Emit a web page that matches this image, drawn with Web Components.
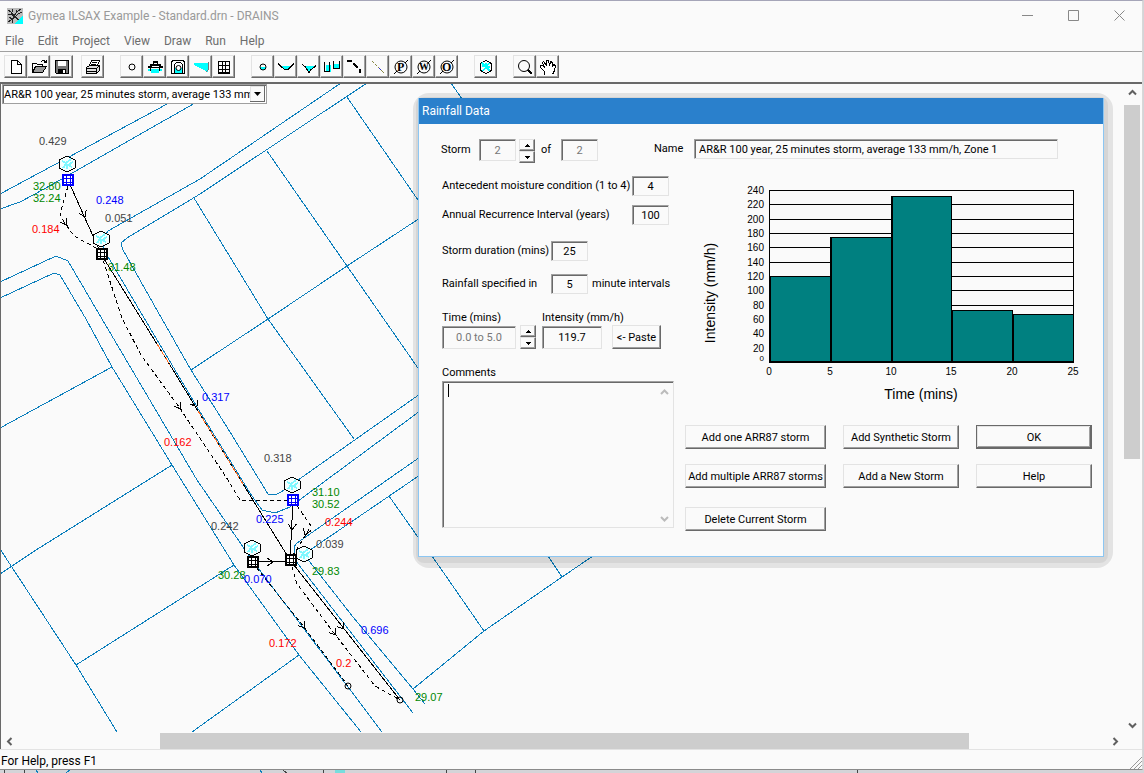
<!DOCTYPE html>
<html lang="en">
<head>
<meta charset="utf-8">
<title>Gymea ILSAX Example - Standard.drn - DRAINS</title>
<style>
  html, body {
    margin: 0;
    height: 100%;
    overflow: hidden;
    background: #d4d4d8;
  }
</style>
</head>
<body>
<drains-window></drains-window>

<script>
const attach = (element, html) => {
  const root = element.attachShadow({ mode: 'open' });
  root.innerHTML = html;
  return root;
};

// toolbar glyphs, 16x16
const ICONS = {
  new: '<path d="M3.5 1.5h6l4 4v9h-10zM9.5 1.5v4h4" fill="#fff" stroke="#000"/>',
  open: '<path d="M1.5 13.5v-9h4l1 1h5v2" fill="none" stroke="#000"/><path d="M1.5 13.5l3-6h11l-4 6z" fill="#999" stroke="#000"/><path d="M9.5 3.5l2-2h2l1 2M12.5 3.5h3v-3" fill="none" stroke="#000"/>',
  save: '<path d="M1.5 1.5h13v13h-12l-1-1z" fill="#777" stroke="#000"/><path d="M4 2h8v5H4z" fill="#fff"/><path d="M4 10h8v4H4z" fill="#000"/><path d="M9 11h2v3H9z" fill="#fff"/>',
  print: '<path d="M4.5 6.5l2-5h8l-2 5" fill="#fff" stroke="#000"/><path d="M7 3.5h5M6 5.5h5" stroke="#000"/><path d="M1.5 8.5l3-2h10v5l-3 3h-10z" fill="#ddd" stroke="#000"/><path d="M1.5 9.5h10l3-3M11.5 9.5v5M2 12.5h9" fill="none" stroke="#000"/>',
  node: '<circle cx="8" cy="8" r="3" fill="none" stroke="#000"/>',
  pit: '<path d="M1 10h14v2H1zM4 12h8v2H4z" fill="#0ff"/><path d="M6 2h5v3h3v2h2v2H1V7h2V5h3z"/><path d="M3.5 9v3M12.5 9v3" stroke="#000"/><path d="M7 4h3v1H7zM5 7h7v1H5z" fill="#fff"/>',
  basin: '<path d="M1.5 14.5v-12h1v-1h11v1h1v12z" fill="none" stroke="#000"/><path d="M4.5 13V5.5l2-2h4l2 2V13z" fill="#fff" stroke="#000"/><path d="M5 9h7v5H5z" fill="#0ff"/><circle cx="8.5" cy="9" r="2.5" fill="#fff" stroke="#000"/>',
  channel: '<path d="M1 4h14v9L1 6z" fill="#0ff"/><path d="M15.5 3v7l-2 3" stroke="#777" fill="none"/>',
  culvert: '<path d="M2.5 2.5h11v11h-11zM2 6.5h11M2 10.5h11M6.5 2v12M9.5 2v12" fill="none" stroke="#000"/><path d="M2 14.5h12" stroke="#000"/>',
  sub: '<path d="M5 8h6v1l-2 2H7l-2-2z" fill="#0ff"/><circle cx="8" cy="8" r="3" fill="none" stroke="#000"/>',
  swale: '<path d="M3 7h10l-4 4H7z" fill="#0ff"/><path d="M0 4.5l3 3 4 3h3l3-3 3-3" fill="none" stroke="#000"/>',
  river: '<path d="M3 7h11l-4 3-2 4-2-4z" fill="#0ff"/><path d="M1 5.5l3 2 2 3 2 3 2-3 3-2 2-2" fill="none" stroke="#000"/>',
  tanks: '<path d="M1.5 5.5h5v7h-5zM9.5 4.5h5v5h-5z" fill="#0ff"/><path d="M.5 3v9h5V3M9.5 2v7h6V2" fill="none" stroke="#000"/>',
  overflow: '<path d="M0 1h5v2H0z"/><path d="M6 4.5l5 4" stroke="#000" stroke-width="2"/><path d="M12 10h2v4h-2z"/>',
  line: '<path d="M2 2l12 12" stroke="#884" stroke-dasharray="3 1"/><path d="M9 9l2 2" stroke="#33c"/>',
  pipe: '<circle cx="8" cy="8" r="6" fill="none" stroke="#000"/><path d="M1 15l3-3M12 4l3-3" stroke="#000"/><text x="4" y="12">P</text>',
  weir: '<circle cx="8" cy="8" r="6" fill="none" stroke="#000"/><path d="M1 15l3-3M12 4l3-3" stroke="#000"/><text class="small" x="3" y="11">W</text>',
  outlet: '<circle cx="8" cy="8" r="6" fill="none" stroke="#000"/><path d="M1 15l3-3M12 4l3-3" stroke="#000"/><text x="3" y="12">O</text>',
  catchment: '<path d="M8 1.5l5.5 3v7l-5.5 3-5.5-3v-7z" fill="none" stroke="#000"/><path d="M4 4l8 8M11 4l-6 8M4 7l8 1M8 4v4" stroke="#0ff" stroke-width="1.5"/>',
  zoom: '<circle cx="7" cy="7" r="5.5" fill="none" stroke="#000"/><path d="M11 11l4 4" stroke="#000" stroke-width="2"/>',
  pan: '<path d="M4.5 15.5v-3l-4-4v-2h2l2 2-2-5 1-1 3 4v-5h2l1 5 1-4 2 1v4l1-2 2 1-1 5-2 4" fill="#fff" stroke="#000"/>',
};

class ToolButton extends HTMLElement {
  constructor() {
    super();
    this.root = attach(this, `
      <style>
        :host { display: block; }
        button {
          display: grid;
          place-items: center;
          width: 23px;
          height: 23px;
          padding: 0;
          background: #fafafa;
          border: 1px solid #e3e3e3;
          border-right-color: #696969;
          border-bottom-color: #696969;
          box-shadow: inset -1px -1px #a0a0a0;
        }
        svg {
          width: 16px;
          height: 16px;
          shape-rendering: crispEdges;
          font: bold 12px "Liberation Serif", serif;
        }
        circle { shape-rendering: geometricPrecision; }
        .small { font-size: 10px; }
      </style>
      <button type="button"><svg viewBox="0 0 16 16"></svg></button>
    `);
  }

  connectedCallback() {
    const name = this.getAttribute('icon');
    this.root.querySelector('button').setAttribute('aria-label', name);
    this.root.querySelector('svg').innerHTML = ICONS[name];
  }
}
customElements.define('tool-button', ToolButton);

class ToolBar extends HTMLElement {
  constructor() {
    super();
    const groups = [
      ['new', 'open', 'save'],
      ['print'],
      ['node', 'pit', 'basin', 'channel', 'culvert'],
      ['sub', 'swale', 'river', 'tanks', 'overflow', 'line', 'pipe', 'weir', 'outlet'],
      ['catchment'],
      ['zoom', 'pan'],
    ];
    attach(this, `
      <style>
        :host {
          display: flex;
          gap: 16px;
          padding: 3px 4px 4px;
          border-top: 1px solid #a0a0a0;
        }
        div { display: flex; }
        div:nth-of-type(2) { margin-left: -8px; }
      </style>
      ${groups.map((group) => `<div>${group.map((name) => `<tool-button icon="${name}"></tool-button>`).join('')}</div>`).join('')}
    `);
  }
}
customElements.define('tool-bar', ToolBar);

class TitleBar extends HTMLElement {
  constructor() {
    super();
    attach(this, `
      <style>
        :host {
          display: flex;
          align-items: center;
          height: 29px;
          padding-left: 7px;
          color: #999;
        }
        h1 {
          flex: 1;
          margin: 0 0 0 5px;
          font-size: 12px;
          font-weight: normal;
        }
        .logo { width: 16px; height: 16px; shape-rendering: crispEdges; }
        button {
          width: 46px;
          height: 29px;
          padding: 0;
          border: none;
          background: none;
          display: grid;
          place-items: center;
        }
        button svg { width: 11px; height: 11px; fill: none; stroke: #888; }
      </style>
      <svg class="logo" viewBox="0 0 16 16">
        <path d="M0 0h16v16H0z" fill="#bbb"/>
        <path d="M16 7v9H8z" fill="#0ff"/>
        <path d="M1 2l3 2 3 4M5 1l1 3M1 6l4 1 3 2M7 8l3-4 4-3M9 2l1 3M15 4l-4 2-3 3-4 3-3 2M5 11v4M2 9l3 2M8 9l4 3" fill="none" stroke="#222"/>
      </svg>
      <h1><slot></slot></h1>
      <button type="button" aria-label="Minimize"><svg viewBox="0 0 11 11"><path d="M0 5.5h11"/></svg></button>
      <button type="button" aria-label="Maximize"><svg viewBox="0 0 11 11"><path d="M.5 .5h10v10h-10z"/></svg></button>
      <button type="button" aria-label="Close"><svg viewBox="0 0 11 11"><path d="M.5 .5l10 10M10.5 .5l-10 10"/></svg></button>
    `);
  }
}
customElements.define('title-bar', TitleBar);

class MenuBar extends HTMLElement {
  constructor() {
    super();
    const items = ['File', 'Edit', 'Project', 'View', 'Draw', 'Run', 'Help'];
    attach(this, `
      <style>
        :host {
          display: flex;
          align-items: center;
          gap: 14px;
          height: 21px;
          padding-left: 5px;
        }
        button {
          padding: 0;
          border: none;
          background: none;
          font: inherit;
          color: #6d6d6d;
        }
      </style>
      ${items.map((item) => `<button type="button">${item}</button>`).join('')}
    `);
  }
}
customElements.define('menu-bar', MenuBar);

class StormPicker extends HTMLElement {
  constructor() {
    super();
    attach(this, `
      <style>
        :host { display: block; width: 265px; }
        div {
          display: grid;
          grid-template-columns: 1fr 16px;
          height: 20px;
          box-sizing: border-box;
          background: #fff;
          border: 1px solid #a0a0a0;
          box-shadow: inset 1px 1px #696969;
        }
        select {
          appearance: none;
          grid-area: 1 / 1 / 2 / 3;
          min-width: 0;
          padding: 0 0 0 1px;
          border: none;
          background: none;
          color: #000;
          font: 11px Roboto, sans-serif;
        }
        svg {
          grid-area: 1 / 2;
          margin: 1px 0;
          width: 15px;
          height: 16px;
          background: #fafafa;
          box-shadow: inset -1px -1px #696969, inset 1px 1px #e3e3e3;
          pointer-events: none;
        }
      </style>
      <div>
        <select aria-label="Storm">
          <option>AR&amp;R 100 year, 25 minutes storm, average 133 mm</option>
        </select>
        <svg viewBox="0 0 15 16"><path d="M4 6h7l-3.5 4z"/></svg>
      </div>
    `);
  }
}
customElements.define('storm-picker', StormPicker);

// thumb="before size after", as shares of the track
class ScrollBar extends HTMLElement {
  constructor() {
    super();
    this.root = attach(this, `
      <style>
        :host { display: flex; background: #fafafa; }
        :host([vertical]) { flex-direction: column; }
        button {
          flex: none;
          display: grid;
          place-items: center;
          width: 16px;
          height: 16px;
          padding: 0;
          border: none;
          background: none;
        }
        svg { width: 9px; height: 9px; fill: none; stroke: #606060; stroke-width: 2; }
        :host([vertical]) svg { transform: rotate(90deg); }
        #thumb { background: #cdcdcd; }
      </style>
      <button type="button" aria-label="Back"><svg viewBox="0 0 9 9"><path d="M6.5 1L3 4.5 6.5 8"/></svg></button>
      <span></span><span id="thumb"></span><span></span>
      <button type="button" aria-label="Forward"><svg viewBox="0 0 9 9"><path d="M2.5 1L6 4.5 2.5 8"/></svg></button>
    `);
  }

  connectedCallback() {
    const shares = this.getAttribute('thumb').split(' ');
    this.root.querySelectorAll('span').forEach((span, i) => {
      span.style.flex = `${shares[i]} 1 0`;
    });
  }
}
customElements.define('scroll-bar', ScrollBar);

// Drainage network: parcel lines, pipes, overflow routes, nodes and results.
// Coordinates are window pixels, the group shifts them to the view's origin.
class DrainMap extends HTMLElement {
  constructor() {
    super();
    const parcels = [
      '0,194 67,158 206,83',
      '0,209 20,202 35,194 67,176 230,83',
      '341,83 200,179 108,231 103,238 104,250 150,328 200,412 250,493 262,510 275,513 290,507 420,411',
      '367,83 200,194 127,238 121,243 123,250 162,319 191,370 230,432 268,494 275,495 281,492 420,394',
      '347,97 420,203', '451,83 462,99',
      '267,151 347,266 420,371',
      '194,198 268,319 354,439',
      '420,218 347,266 268,319 191,370',
      '0,282 56,256 68,261 102,319 197,480 252,560 382,732',
      '0,298 54,273 60,275 86,319 112,367 172,465 234,565 299,655 361,732',
      '0,428 112,367', '0,574 36,550 172,465', '76,665 234,565', '192,732 299,655',
      '0,549 76,665 117,732',
      '420,457 297,543 294,547 295,560 413,713',
      '420,475 310,550 306,557 353,617 413,689 425,704',
      '389,496 420,540', '432,556 484,631',
      '548,556 562,577', '593,556 562,577 484,631 413,689',
    ];
    const pipes = [
      '68,180 101,254', '101,254 157,344', '170,365 198,411', '243,484 290,560',
      '293,500 290,560', '252,562 290,561', '290,560 400,700',
    ];
    // stretches of the main pipe that are highlighted
    const flagged = ['157,344 170,365', '198,411 243,484'];
    const routes = [
      '68,186 60,214 64,222 74,236 96,248 101,254',
      '101,254 122,318 141,355 179,407 228,480 240,500 291,500',
      '293,500 311,526 305,536 290,560',
      '252,562 304,627 348,686',
      '290,560 297,584 334,633 375,686 400,700',
    ];
    // x, y, heading in degrees
    const arrows = [
      [85, 217, 66], [197, 407, 58], [292, 530, 92], [273, 562, 0], [344, 629, 52],
      [67, 225, 55], [181, 409, 55], [305, 535, 110], [305, 628, 52], [336, 635, 52],
    ];
    const hexes = [[67, 164], [101, 239], [292, 485], [252, 548], [304, 554]];
    const pits = [[68, 180, '#00f'], [293, 500, '#00f'], [102, 254, '#000'], [253, 562, '#000'], [291, 560, '#000']];
    const labels = [
      [39, 145, '0.429', 'flow'], [33, 190, '32.80', 'level'], [33, 202, '32.24', 'level'],
      [96, 204, '0.248', 'pipe'], [105, 222, '0.051', 'flow'], [32, 233, '0.184', 'over'],
      [108, 271, '31.48', 'level'], [202, 401, '0.317', 'pipe'], [164, 446, '0.162', 'over'],
      [264, 462, '0.318', 'flow'], [312, 496, '31.10', 'level'], [312, 508, '30.52', 'level'],
      [256, 523, '0.225', 'pipe'], [325, 526, '0.244', 'over'], [211, 530, '0.242', 'flow'],
      [316, 548, '0.039', 'flow'], [312, 575, '29.83', 'level'], [218, 579, '30.28', 'level'],
      [244, 583, '0.070', 'pipe'], [361, 634, '0.696', 'pipe'], [269, 647, '0.172', 'over'],
      [336, 667, '0.2', 'over'], [415, 701, '29.07', 'level'],
    ];
    const lines = (list) => list.map((p) => `<polyline points="${p}"/>`).join('');
    attach(this, `
      <style>
        :host { display: block; overflow: hidden; }
        svg { display: block; width: 100%; height: 100%; shape-rendering: crispEdges; }
        polyline { fill: none; }
        circle { shape-rendering: geometricPrecision; }
        .parcels { stroke: #0a7ebc; }
        .pipes, .arrows { stroke: #000; fill: none; }
        .flagged { stroke: #000; }
        .flagged + .flagged { stroke: #ff6a20; stroke-dasharray: 6 2; }
        .routes { stroke: #000; stroke-dasharray: 4 3; }
        .hexes path { fill: #f4ffff; stroke: #000; }
        .hexes path + path { fill: none; stroke: #7ff8ff; stroke-width: 2; }
        text { font: 11px "Liberation Sans", sans-serif; }
        .flow { fill: #444; }
        .level { fill: #080; }
        .pipe { fill: #00f; }
        .over { fill: #f00; }
      </style>
      <svg>
        <g transform="translate(-1 -84)">
          <g class="parcels">${lines(parcels)}</g>
          <g class="pipes">${lines(pipes)}</g>
          <g class="flagged">${lines(flagged)}</g>
          <g class="flagged">${lines(flagged)}</g>
          <g class="routes">${lines(routes)}</g>
          <g class="arrows">
            ${arrows.map(([x, y, a]) => `<path transform="translate(${x} ${y}) rotate(${a})" d="M-6 -4L0 0L-6 4"/>`).join('')}
            <circle cx="348" cy="686" r="3"/><circle cx="400" cy="700" r="3"/>
          </g>
          <g class="hexes">
            ${hexes.map(([x, y]) => `<g transform="translate(${x} ${y})"><path d="M0 -8l8 4v8l-8 4-8-4v-8z"/><path d="M-5 -3l4 2 5-4M-4 4l3-4 6 3M-1 -1l1 6M1 1l5-3"/></g>`).join('')}
          </g>
          ${pits.map(([x, y, c]) => `<g transform="translate(${x} ${y})"><path d="M-5 -5h10v10h-10z" fill="#fff" stroke="${c}" stroke-width="2"/><path d="M-1.5 -5v10M2.5 -5v10M-5 -1.5h10M-5 2.5h10" stroke="${c}"/></g>`).join('')}
          ${labels.map(([x, y, t, c]) => `<text x="${x}" y="${y}" class="${c}">${t}</text>`).join('')}
        </g>
      </svg>
    `);
  }
}
customElements.define('drain-map', DrainMap);

class PushButton extends HTMLElement {
  constructor() {
    super();
    attach(this, `
      <style>
        :host { display: block; }
        button {
          width: 100%;
          height: 24px;
          padding: 1px 1px 0;
          background: #fafafa;
          border: 1px solid #e3e3e3;
          border-right-color: #696969;
          border-bottom-color: #696969;
          box-shadow: inset -1px -1px #a0a0a0;
          color: #000;
          font: inherit;
          white-space: nowrap;
        }
        :host([default]) button {
          border-color: #696969;
          box-shadow: inset -1px -1px #696969, inset 1px 1px #e3e3e3, inset -2px -2px #a0a0a0;
        }
      </style>
      <button type="button"><slot></slot></button>
    `);
  }
}
customElements.define('push-button', PushButton);

// label + sunken text box; the box width comes from --box, the label's from --label
class FieldBox extends HTMLElement {
  constructor() {
    super();
    this.root = attach(this, `
      <style>
        :host { display: flex; align-items: center; white-space: nowrap; }
        :host([stacked]) { flex-direction: column; align-items: flex-start; gap: 1px; }
        label { width: var(--label, auto); }
        input {
          box-sizing: border-box;
          flex: none;
          width: var(--box, 37px);
          height: var(--box-height, 20px);
          padding: 0 4px;
          border: 1px solid #e3e3e3;
          border-top-color: #a0a0a0;
          border-left-color: #a0a0a0;
          box-shadow: inset 1px 1px #696969;
          background: #fafafa;
          color: #000;
          font: inherit;
          text-align: var(--align, center);
        }
        input:disabled { color: #777; }
        ::slotted(*) { margin-left: 4px; }
      </style>
      <label for="box"></label>
      <input id="box" type="text">
      <slot></slot>
    `);
  }

  connectedCallback() {
    const input = this.root.querySelector('input');
    this.root.querySelector('label').textContent = this.getAttribute('label');
    input.value = this.getAttribute('value');
    input.disabled = this.hasAttribute('disabled');
  }
}
customElements.define('field-box', FieldBox);

class SpinButtons extends HTMLElement {
  constructor() {
    super();
    attach(this, `
      <style>
        :host { display: block; width: 16px; }
        button {
          display: grid;
          place-items: center;
          width: 16px;
          height: 12px;
          padding: 0;
          background: #fafafa;
          border: 1px solid #e3e3e3;
          border-right-color: #696969;
          border-bottom-color: #696969;
          box-shadow: inset -1px -1px #a0a0a0;
        }
        svg { display: block; width: 5px; height: 3px; shape-rendering: crispEdges; }
      </style>
      <button type="button" aria-label="Up"><svg viewBox="0 0 5 3"><path d="M0 3h5L2.5 0z"/></svg></button>
      <button type="button" aria-label="Down"><svg viewBox="0 0 5 3"><path d="M0 0h5L2.5 3z"/></svg></button>
    `);
  }
}
customElements.define('spin-buttons', SpinButtons);

class RainfallChart extends HTMLElement {
  constructor() {
    super();
    const values = [120, 174, 232, 73, 67];
    const left = 84;
    const top = 14;
    const width = 304;
    const height = 172;
    const x = (index) => left + Math.round(index * width / 5);
    const y = (value) => Math.round(top + height - value * height / 240);
    const ticks = Array.from({ length: 12 }, (_, i) => (i + 1) * 20);
    attach(this, `
      <style>
        :host { display: block; }
        svg { display: block; width: 100%; }
        text { font: 10px "Liberation Sans", sans-serif; }
        .title { font-size: 14px; }
        .x, .title { text-anchor: middle; }
        .y { text-anchor: end; }
        .zero { font-size: 8px; }
        path, rect { stroke: #000; fill: none; shape-rendering: crispEdges; }
        rect { fill: #008080; }
      </style>
      <svg viewBox="0 0 407 249" role="img" aria-label="Rainfall intensity">
        ${ticks.map((t) => `<path d="M${left} ${y(t) + 0.5}h${width}"/><text class="y" x="79" y="${y(t) + 4}">${t}</text>`).join('')}
        <text class="y zero" x="79" y="185">0</text>
        ${values.map((v, i) => `<rect x="${x(i) + 0.5}" y="${y(v) + 0.5}" width="${x(i + 1) - x(i)}" height="${top + height - y(v)}"/>`).join('')}
        ${values.map((v, i) => `<path d="M${x(i) + 1} ${y(v)}V186" stroke-width="${i ? 2 : 1}"/>`).join('')}
        <path d="M${left + 0.5} ${top}v172h${width}V${top}"/>
        <path d="M${left} 186h${width + 1}" stroke-width="2"/>
        ${[0, 5, 10, 15, 20, 25].map((t, i) => `<text class="x" x="${x(i)}" y="199">${t}</text>`).join('')}
        <text class="title" x="236" y="223">Time (mins)</text>
        <text class="title" transform="translate(30 117) rotate(-90)">Intensity (mm/h)</text>
      </svg>
    `);
  }
}
customElements.define('rainfall-chart', RainfallChart);

class RainfallDialog extends HTMLElement {
  constructor() {
    super();
    attach(this, `
      <style>
        :host {
          display: block;
          box-sizing: border-box;
          width: fit-content;
          font: 11px/14px Roboto, sans-serif;
          color: #000;
        }
        .shade {
          position: absolute;
          inset: -5px -9px -11px -5px;
          border-radius: 16px;
          background: rgba(0, 0, 0, .09);
        }
        .shade + .shade {
          inset: -1px -4px -6px -2px;
          border-radius: 8px;
          background: rgba(0, 0, 0, .06);
        }
        .panel {
          position: relative;
          background: #fafafa;
          border: 1px solid #8cc6f2;
          border-top: none;
        }
        h2 {
          margin: 0;
          padding-left: 3px;
          background: #2a80cc;
          color: #fff;
          font: 12px/26px Roboto, sans-serif;
        }
        header {
          display: flex;
          align-items: flex-start;
          padding: 15px 45px 0 22px;
        }
        header field-box { --box-height: 22px; }
        .storm { --label: 38px; margin-right: 3px; }
        .total { --label: 20px; margin-left: 6px; }
        header .name {
          --label: 40px;
          --box-height: 20px;
          --align: left;
          --box: 364px;
          margin-left: auto;
        }
        main {
          display: grid;
          grid-template-columns: 232px 407px;
          column-gap: 11px;
          padding: 13px 11px 25px 23px;
        }
        .wide { --label: 190px; margin-bottom: 9px; }
        .narrow { --label: 109px; margin-bottom: 13px; }
        .group { margin-top: 16px; }
        .intervals { display: flex; align-items: flex-end; margin-top: 17px; --box-height: 23px; }
        .intervals spin-buttons { margin: 0 6px 0 4px; }
        .time { --box: 74px; }
        .intensity { --box: 60px; width: 60px; }
        .intervals push-button { width: 49px; margin-left: 10px; }
        .comments { display: block; margin: 17px 0 1px; }
        .memo { position: relative; }
        textarea {
          display: block;
          box-sizing: border-box;
          width: 100%;
          height: 147px;
          padding: 3px 4px;
          resize: none;
          border: 1px solid #e3e3e3;
          border-top-color: #a0a0a0;
          border-left-color: #a0a0a0;
          box-shadow: inset 1px 1px #696969;
          background: #fafafa;
          font: inherit;
          outline: none;
        }
        .memo svg {
          position: absolute;
          inset: 8px 5px auto auto;
          width: 9px;
          height: 6px;
          fill: none;
          stroke: #bbb;
          stroke-width: 2;
        }
        .memo svg.down { inset: auto 5px 6px auto; }
        .memo .caret {
          position: absolute;
          inset: 3px auto auto 6px;
          width: 1px;
          height: 13px;
          background: #000;
        }
        .actions {
          display: grid;
          grid-template-columns: 141px 116px 116px;
          gap: 15px 17px;
        }
        .last { margin-top: 4px; }
      </style>
      <div class="shade"></div>
      <div class="shade"></div>
      <div class="panel">
        <h2>Rainfall Data</h2>
        <header>
          <field-box class="storm" label="Storm" value="2" disabled></field-box>
          <spin-buttons></spin-buttons>
          <field-box class="total" label="of" value="2" disabled></field-box>
          <field-box class="name" label="Name" value="AR&amp;R 100 year, 25 minutes storm, average 133 mm/h, Zone 1"></field-box>
        </header>
        <main>
          <section>
            <field-box class="wide" label="Antecedent moisture condition (1 to 4)" value="4"></field-box>
            <field-box class="wide" label="Annual Recurrence Interval (years)" value="100"></field-box>
            <field-box class="narrow group" label="Storm duration (mins)" value="25"></field-box>
            <field-box class="narrow" label="Rainfall specified in" value="5"><span>minute intervals</span></field-box>
            <div class="intervals">
              <field-box class="time" stacked label="Time (mins)" value="0.0 to 5.0" disabled></field-box>
              <spin-buttons></spin-buttons>
              <field-box class="intensity" stacked label="Intensity (mm/h)" value="119.7"></field-box>
              <push-button>&lt;- Paste</push-button>
            </div>
            <label class="comments" for="comments">Comments</label>
            <div class="memo">
              <textarea id="comments"></textarea>
              <span class="caret"></span>
              <svg viewBox="0 0 9 6"><path d="M1 5l3.5-3.5L8 5"/></svg>
              <svg class="down" viewBox="0 0 9 6"><path d="M1 1l3.5 3.5L8 1"/></svg>
            </div>
          </section>
          <section>
            <rainfall-chart></rainfall-chart>
            <div class="actions">
              <push-button>Add one ARR87 storm</push-button>
              <push-button>Add Synthetic Storm</push-button>
              <push-button default>OK</push-button>
              <push-button>Add multiple ARR87 storms</push-button>
              <push-button>Add a New Storm</push-button>
              <push-button>Help</push-button>
              <push-button class="last">Delete Current Storm</push-button>
            </div>
          </section>
        </main>
      </div>
    `);
  }
}
customElements.define('rainfall-dialog', RainfallDialog);

class StatusBar extends HTMLElement {
  constructor() {
    super();
    attach(this, `
      <style>
        :host {
          display: flex;
          justify-content: space-between;
          align-items: flex-end;
          height: 19px;
          padding: 0 0 0 1px;
          border-top: 1px solid #e3e3e3;
          color: #000;
        }
        svg { width: 12px; height: 12px; stroke: #999; }
      </style>
      <span><slot></slot></span>
      <svg viewBox="0 0 12 12"><path d="M0 12L12 0M4 12l8-8M8 12l4-4"/></svg>
    `);
  }
}
customElements.define('status-bar', StatusBar);

class DrainsWindow extends HTMLElement {
  constructor() {
    super();
    attach(this, `
      <style>
        :host {
          display: flex;
          flex-direction: column;
          height: 100vh;
          font: 12px/16px Roboto, sans-serif;
        }
        .frame {
          flex: 1;
          min-height: 0;
          display: flex;
          flex-direction: column;
          margin-right: 1px;
          background: #fafafa;
          border-top: 1px solid #a5a5b8;
          border-right: 1px solid #d8d8d8;
          border-bottom: 1px solid #8a8a8a;
        }
        .work {
          position: relative;
          flex: 1;
          min-height: 0;
          display: grid;
          grid-template: minmax(0, 1fr) 16px / minmax(0, 1fr) 16px;
          padding-right: 2px;
          border-top: 2px solid #696969;
          border-left: 1px solid #696969;
        }
        storm-picker {
          position: absolute;
          top: 0;
          left: 1px;
        }
        rainfall-dialog {
          position: absolute;
          top: 14px;
          left: 417px;
        }
        .below { display: block; width: 100%; height: 3px; shape-rendering: crispEdges; }
      </style>
      <div class="frame">
        <title-bar>Gymea ILSAX Example - Standard.drn - DRAINS</title-bar>
        <menu-bar></menu-bar>
        <tool-bar></tool-bar>
        <div class="work">
          <drain-map></drain-map>
          <scroll-bar vertical thumb="5 354 258"></scroll-bar>
          <scroll-bar thumb="143 808 139"></scroll-bar>
          <storm-picker></storm-picker>
          <rainfall-dialog></rainfall-dialog>
        </div>
        <status-bar>For Help, press F1</status-bar>
      </div>
      <svg class="below">
        <path d="M4.5 0v3M24.5 0v3M283 0l4 3M323.5 0v3M446.5 0v3M475.5 0v3M857.5 0v3" stroke="#444"/>
        <path d="M36 0l2 3M70 0l-4 3M260 0l2 3" stroke="#0a7ebc"/>
        <path d="M335 0h10v3h-10z" fill="#7dd"/>
      </svg>
    `);
  }
}
customElements.define('drains-window', DrainsWindow);
</script>
</body>
</html>
